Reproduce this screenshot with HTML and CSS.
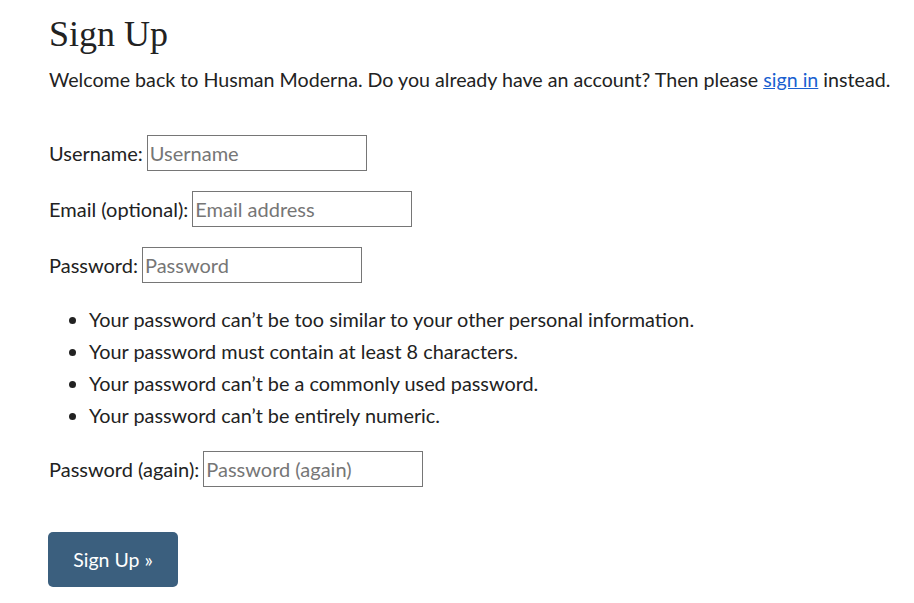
FILE: index.html
```html
<!DOCTYPE html>
<html lang="en">
<head>
<meta charset="utf-8">
<title>Sign Up</title>
<link rel="stylesheet" href="styles.css">
</head>
<body>
<main class="page">
  <h1 class="title">Sign Up</h1>
  <p class="intro">Welcome back to Husman Moderna. Do you already have an account? Then please <a href="#" class="link">sign in</a> instead.</p>
  <form class="signup">
    <p class="row"><label for="u">Username:</label><input id="u" class="field" type="text" placeholder="Username"></p>
    <p class="row"><label for="e">Email (optional):</label><input id="e" class="field" type="email" placeholder="Email address"></p>
    <p class="row"><label for="p1">Password:</label><input id="p1" class="field" type="password" placeholder="Password"></p>
    <ul class="rules">
      <li>Your password can’t be too similar to your other personal information.</li>
      <li>Your password must contain at least 8 characters.</li>
      <li>Your password can’t be a commonly used password.</li>
      <li>Your password can’t be entirely numeric.</li>
    </ul>
    <p class="row"><label for="p2">Password (again):</label><input id="p2" class="field" type="password" placeholder="Password (again)"></p>
    <button class="submit" type="button">Sign Up »</button>
  </form>
</main>
</body>
</html>
```
FILE: styles.css
```css
html, body {
  margin: 0;
  padding: 0;
  background: #fff;
}
body {
  font-family: Lato, "Liberation Sans", sans-serif;
  font-size: 19.6px;
  color: #222;
}
.page {
  padding: 0 0 0 49px;
}
.title {
  font-family: "Liberation Serif", serif;
  font-weight: normal;
  font-size: 36px;
  line-height: 44px;
  margin: 12px 0 0 0;
  color: #222;
}
.intro {
  margin: 8px 0 0 0;
  line-height: 32px;
  font-size: 19.65px;
}
.link {
  color: #1a5fd0;
}
.signup {
  margin-top: 39px;
}
.row {
  margin: 0 0 20px 0;
  height: 36px;
  display: flex;
  align-items: center;
  gap: 4px;
  font-size: 20px;
}
.field {
  box-sizing: border-box;
  width: 220px;
  height: 36px;
  margin: 0;
  padding: 1px 2px;
  border: 1px solid #767676;
  border-radius: 0;
  font-family: Lato, sans-serif;
  font-size: 20px;
  color: #222;
}
.field::placeholder {
  color: #767676;
}
.rules {
  margin: 0 0 20px 0;
  padding-left: 40px;
  line-height: 32px;
  font-size: 19.85px;
}
.submit {
  margin-top: 25px;
  width: 130px;
  height: 55px;
  background: #3b5f7e;
  color: #fff;
  border: none;
  border-radius: 5px;
  font-family: Lato, sans-serif;
  font-size: 19.5px;
  padding: 0;
  margin-left: -1px;
}
```
